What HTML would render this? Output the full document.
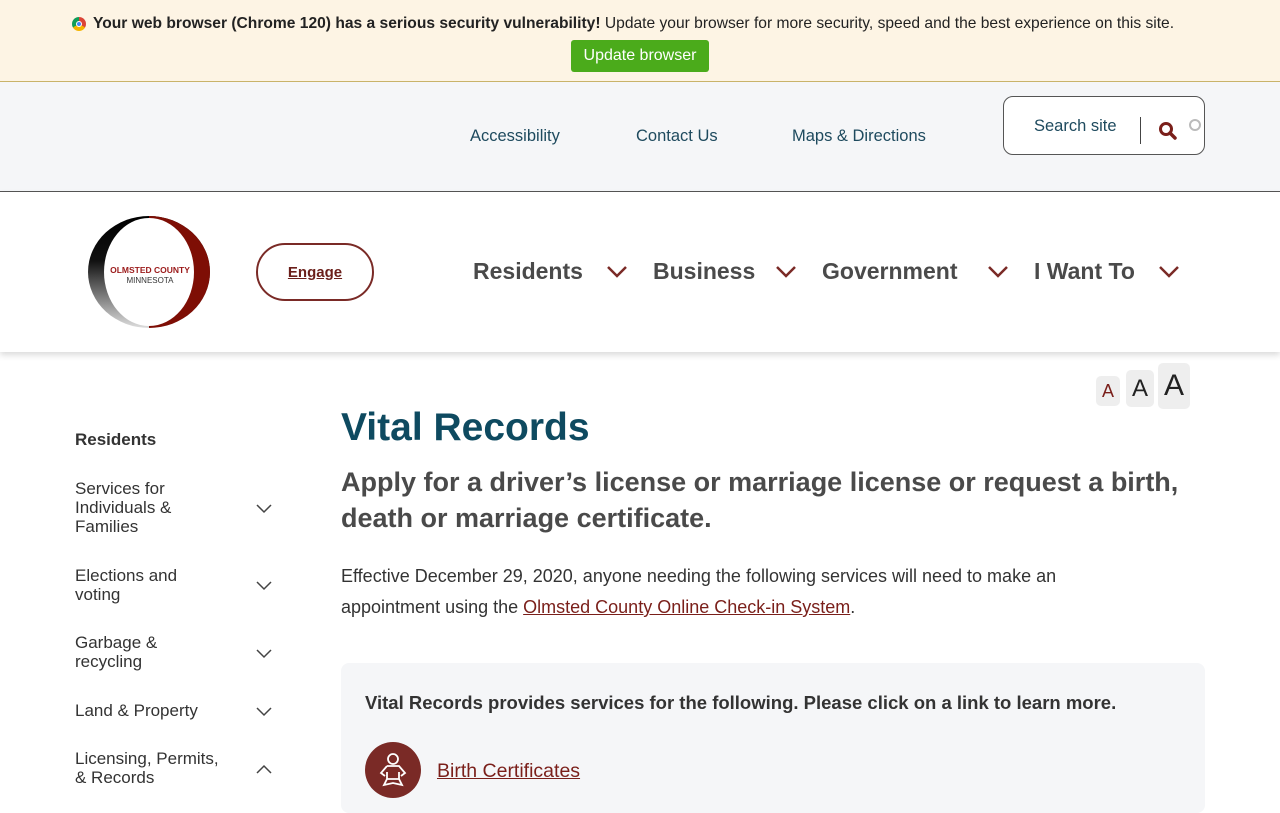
<!DOCTYPE html>
<html><head><meta charset="utf-8"><style>
*{margin:0;padding:0;box-sizing:border-box}
body{width:1280px;height:800px;overflow:hidden;font-family:"Liberation Sans",sans-serif;background:#fff;position:relative;color:#333}
.a{position:absolute}
.banner{left:0;top:0;width:1280px;height:82px;background:#fdf4e4;border-bottom:1px solid #c9b36a}
.util{left:0;top:82px;width:1280px;height:110px;background:#f5f6f8;border-bottom:1px solid #555}
.util a{position:absolute;top:45px;font-size:16.5px;color:#1e4a5e;text-decoration:none}
.nav{left:0;top:192px;width:1280px;height:160px;background:#fff;box-shadow:0 3px 6px rgba(0,0,0,.15)}
.nav .m{position:absolute;top:66px;font-size:23px;font-weight:bold;color:#4a4a4a}
.chev{position:absolute;top:73px;width:22px;height:14px}
.side{font-size:17px;color:#333;line-height:19px}
.sc{position:absolute;left:256px;width:16px;height:10px}
</style></head><body>
<div class="a banner">
 <div class="a" style="left:72px;top:17px;width:14px;height:14px;border-radius:50%;background:conic-gradient(#db4437 0 120deg,#f4b400 120deg 240deg,#0f9d58 240deg);"><div style="margin:4px;width:6px;height:6px;border-radius:50%;background:#4285f4;border:1px solid #fff"></div></div>
 <div class="a" style="left:93px;top:15px;font-size:15.6px;color:#222;white-space:nowrap"><b>Your web browser (Chrome 120) has a serious security vulnerability!</b> Update your browser for more security, speed and the best experience on this site.</div>
 <div class="a" style="left:571px;top:40px;width:138px;height:32px;background:#4bab1b;border-radius:3px;color:#fff;font-size:16px;text-align:center;line-height:32px">Update browser</div>
</div>
<div class="a util">
 <a style="left:470px">Accessibility</a><a style="left:636px">Contact Us</a><a style="left:792px">Maps &amp; Directions</a>
 <div class="a" style="left:1003px;top:14px;width:202px;height:59px;border:1px solid #555;border-radius:10px;background:#fff">
  <span class="a" style="left:30px;top:20px;font-size:16.5px;color:#1e4a5e">Search site</span>
  <div class="a" style="left:136px;top:20px;width:1px;height:27px;background:#444"></div>
  <svg class="a" style="left:154px;top:24px" width="20" height="20" viewBox="0 0 20 20"><circle cx="8" cy="8" r="5.5" fill="none" stroke="#7a1f1a" stroke-width="3"/><path d="M12 12l5 5" stroke="#7a1f1a" stroke-width="3.5" stroke-linecap="round"/></svg>
  <div class="a" style="left:185px;top:22px;width:12px;height:12px;border-radius:50%;border:2px solid #bbb"></div>
 </div>
</div>
<div class="a nav">
 <div class="a" style="left:88px;top:24px;width:122px;height:112px;border-radius:50%;background:linear-gradient(180deg,#000,#111 40%,#ddd);"></div>
 <div class="a" style="left:88px;top:24px;width:122px;height:112px;border-radius:50%;background:#7e0e05;clip-path:inset(0 0 0 50%)"></div>
 <div class="a" style="left:104px;top:26px;width:90px;height:108px;border-radius:50%;background:#fff"></div>
 <div class="a" style="left:106px;top:73px;font-size:8.5px;font-weight:bold;color:#9b1a1a;width:88px;text-align:center">OLMSTED COUNTY</div>
 <div class="a" style="left:106px;top:84px;font-size:8px;color:#333;width:88px;text-align:center">MINNESOTA</div>
 <div class="a" style="left:256px;top:51px;width:118px;height:58px;border:2px solid #7a2a26;border-radius:29px;text-align:center;line-height:56px;font-size:15px;font-weight:bold;color:#6b1f1a;text-decoration:underline">Engage</div>
 <span class="m" style="left:473px">Residents</span><span class="m" style="left:653px">Business</span><span class="m" style="left:822px">Government</span><span class="m" style="left:1034px">I Want To</span>
 <svg class="chev" style="left:606px" viewBox="0 0 22 14"><path d="M2 2l9 9 9-9" fill="none" stroke="#7a2a26" stroke-width="2.5"/></svg>
 <svg class="chev" style="left:775px" viewBox="0 0 22 14"><path d="M2 2l9 9 9-9" fill="none" stroke="#7a2a26" stroke-width="2.5"/></svg>
 <svg class="chev" style="left:987px" viewBox="0 0 22 14"><path d="M2 2l9 9 9-9" fill="none" stroke="#7a2a26" stroke-width="2.5"/></svg>
 <svg class="chev" style="left:1158px" viewBox="0 0 22 14"><path d="M2 2l9 9 9-9" fill="none" stroke="#7a2a26" stroke-width="2.5"/></svg>
</div>
<div class="a" style="left:1096px;top:376px;width:24px;height:30px;background:#eee;border-radius:5px;text-align:center;font-size:18px;line-height:30px;color:#7a1f1a">A</div>
<div class="a" style="left:1126px;top:370px;width:28px;height:37px;background:#eee;border-radius:5px;text-align:center;font-size:24px;line-height:38px;color:#222">A</div>
<div class="a" style="left:1158px;top:363px;width:32px;height:46px;background:#eee;border-radius:5px;text-align:center;font-size:30px;line-height:46px;color:#222">A</div>
<div class="a side" style="left:75px;top:430px;font-weight:bold">Residents</div>
<div class="a side" style="left:75px;top:479px;width:150px">Services for Individuals &amp; Families</div>
<div class="a side" style="left:75px;top:566px;width:150px">Elections and voting</div>
<div class="a side" style="left:75px;top:633px;width:150px">Garbage &amp; recycling</div>
<div class="a side" style="left:75px;top:701px;width:150px">Land &amp; Property</div>
<div class="a side" style="left:75px;top:749px;width:150px">Licensing, Permits, &amp; Records</div>
<svg class="sc" style="top:504px" viewBox="0 0 16 10"><path d="M1 1l7 7 7-7" fill="none" stroke="#444" stroke-width="1.5"/></svg>
<svg class="sc" style="top:581px" viewBox="0 0 16 10"><path d="M1 1l7 7 7-7" fill="none" stroke="#444" stroke-width="1.5"/></svg>
<svg class="sc" style="top:649px" viewBox="0 0 16 10"><path d="M1 1l7 7 7-7" fill="none" stroke="#444" stroke-width="1.5"/></svg>
<svg class="sc" style="top:707px" viewBox="0 0 16 10"><path d="M1 1l7 7 7-7" fill="none" stroke="#444" stroke-width="1.5"/></svg>
<svg class="sc" style="top:764px" viewBox="0 0 16 10"><path d="M1 9l7-7 7 7" fill="none" stroke="#444" stroke-width="1.5"/></svg>
<div class="a" style="left:341px;top:406px;font-size:39px;font-weight:bold;color:#0e4a60">Vital Records</div>
<div class="a" style="left:341px;top:464px;width:870px;font-size:27px;font-weight:bold;color:#4a4a4a;line-height:36px">Apply for a driver’s license or marriage license or request a birth, death or marriage certificate.</div>
<div class="a" style="left:341px;top:561px;width:800px;font-size:18px;color:#333;line-height:31px">Effective December 29, 2020, anyone needing the following services will need to make an appointment using the <span style="color:#7a1f1a;text-decoration:underline">Olmsted County Online Check-in System</span>.</div>
<div class="a" style="left:341px;top:663px;width:864px;height:150px;background:#f5f6f8;border-radius:8px">
 <div class="a" style="left:24px;top:29px;font-size:18.5px;font-weight:bold;color:#333">Vital Records provides services for the following. Please click on a link to learn more.</div>
 <div class="a" style="left:24px;top:79px;width:56px;height:56px;border-radius:50%;background:#7a2a26"></div>
 <svg class="a" style="left:36px;top:89px" width="32" height="36" viewBox="0 0 32 36" fill="none" stroke="#fff" stroke-width="1.8"><circle cx="16" cy="7" r="5"/><path d="M10 14h12l6 7-4 3M10 14l-6 7 4 3M10 20v7h12v-7M10 27l-3 6 9-2 9 2-3-6"/></svg>
 <div class="a" style="left:96px;top:97px;font-size:19.5px;color:#7a1f1a;text-decoration:underline">Birth Certificates</div>
</div>
</body></html>
